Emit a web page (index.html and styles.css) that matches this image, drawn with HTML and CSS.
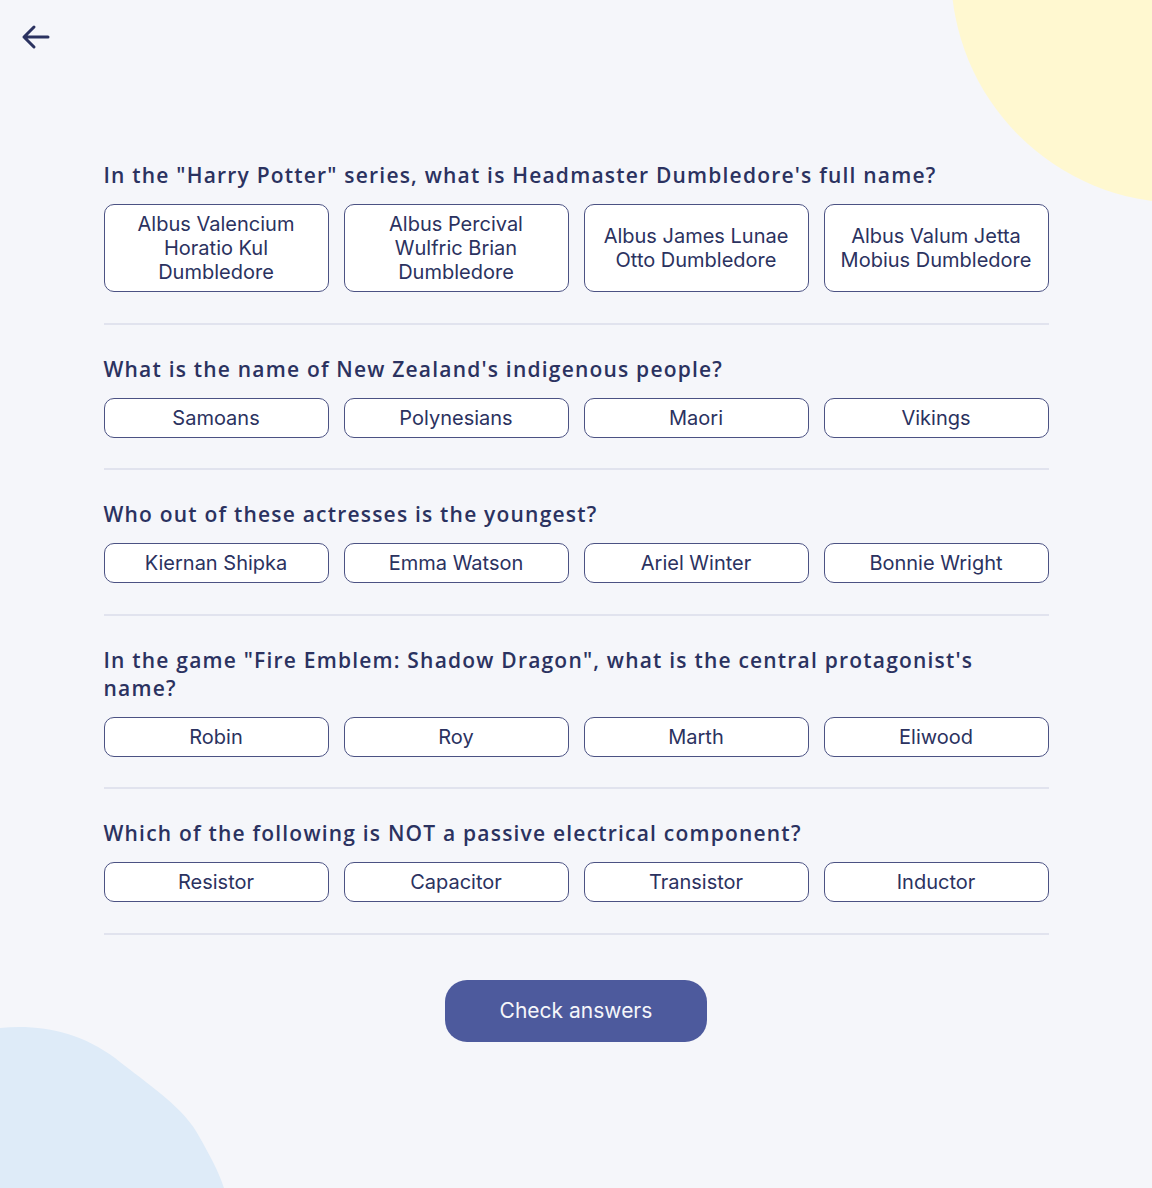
FILE: index.html
```html
<!DOCTYPE html>
<html lang="en">
<head>
<meta charset="utf-8">
<title>Quiz</title>
<link rel="stylesheet" href="styles.css">
</head>
<body>
<svg class="blob blob-yellow" width="210" height="210" viewBox="0 0 210 210"><circle cx="240" cy="-28" r="231" fill="#fff8d0"/></svg>
<svg class="blob blob-blue" width="240" height="170" viewBox="0 0 240 170"><path d="M0 10 C40 6 80 14 115 40 C150 68 185 90 200 120 C210 138 218 152 224 170 L0 170 Z" fill="#deebf8"/></svg>
<a class="back" href="#" aria-label="Back">
<svg width="30" height="26" viewBox="0 0 30 26"><path d="M3 13 H27 M13 3 L3 13 L13 23" fill="none" stroke="#2b3260" stroke-width="3" stroke-linecap="round" stroke-linejoin="round"/></svg>
</a>
<main class="quiz">
<section class="q">
<h2>In the "Harry Potter" series, what is Headmaster Dumbledore's full name?</h2>
<div class="opts">
<button class="opt">Albus Valencium Horatio Kul Dumbledore</button>
<button class="opt">Albus Percival Wulfric Brian Dumbledore</button>
<button class="opt">Albus James Lunae Otto Dumbledore</button>
<button class="opt">Albus Valum Jetta Mobius Dumbledore</button>
</div>
</section>
<section class="q">
<h2>What is the name of New Zealand's indigenous people?</h2>
<div class="opts">
<button class="opt">Samoans</button>
<button class="opt">Polynesians</button>
<button class="opt">Maori</button>
<button class="opt">Vikings</button>
</div>
</section>
<section class="q">
<h2>Who out of these actresses is the youngest?</h2>
<div class="opts">
<button class="opt">Kiernan Shipka</button>
<button class="opt">Emma Watson</button>
<button class="opt">Ariel Winter</button>
<button class="opt">Bonnie Wright</button>
</div>
</section>
<section class="q">
<h2>In the game "Fire Emblem: Shadow Dragon", what is the central protagonist's name?</h2>
<div class="opts">
<button class="opt">Robin</button>
<button class="opt">Roy</button>
<button class="opt">Marth</button>
<button class="opt">Eliwood</button>
</div>
</section>
<section class="q">
<h2>Which of the following is NOT a passive electrical component?</h2>
<div class="opts">
<button class="opt">Resistor</button>
<button class="opt">Capacitor</button>
<button class="opt">Transistor</button>
<button class="opt">Inductor</button>
</div>
</section>
<div class="actions"><button class="check">Check answers</button></div>
</main>
</body>
</html>
```
FILE: styles.css
```css
html, body {
  margin: 0;
  padding: 0;
}
body {
  background: #f5f6fa;
  min-height: 1188px;
  position: relative;
  overflow: hidden;
  font-family: Inter, "Liberation Sans", sans-serif;
  color: #2b3260;
}
.blob {
  position: absolute;
  z-index: 0;
}
.blob-yellow {
  top: 0;
  right: 0;
}
.blob-blue {
  bottom: 0;
  left: 0;
}
.back {
  position: absolute;
  top: 24px;
  left: 21px;
  display: block;
  line-height: 0;
  z-index: 1;
}
.quiz {
  position: relative;
  z-index: 1;
  width: 945px;
  margin: 0 auto;
  padding-top: 161px;
}
.q {
  border-bottom: 2px solid #e1e3ee;
  padding-bottom: 30.5px;
  margin-bottom: 30px;
}
.q h2 {
  margin: 0 0 15px;
  max-width: 920px;
  font-family: "Open Sans", "Noto Sans", sans-serif;
  font-weight: 600;
  font-size: 21px;
  line-height: 28px;
  letter-spacing: 1.2px;
  color: #2b3260;
}
.opts {
  display: grid;
  grid-template-columns: repeat(4, 1fr);
  gap: 15px;
}
.opt {
  background: #fff;
  border: 1px solid #4b5283;
  border-radius: 10px;
  padding: 7px 12px;
  font-family: Inter, "Liberation Sans", sans-serif;
  font-size: 20px;
  line-height: 24px;
  color: #2b3260;
  text-align: center;
  cursor: pointer;
}
.actions {
  display: flex;
  justify-content: center;
  padding-top: 15px;
}
.check {
  width: 262px;
  height: 62px;
  border: none;
  border-radius: 22px;
  background: #4d5a9d;
  color: #f5f6fa;
  font-family: Inter, "Liberation Sans", sans-serif;
  font-size: 21px;
  cursor: pointer;
}
```
